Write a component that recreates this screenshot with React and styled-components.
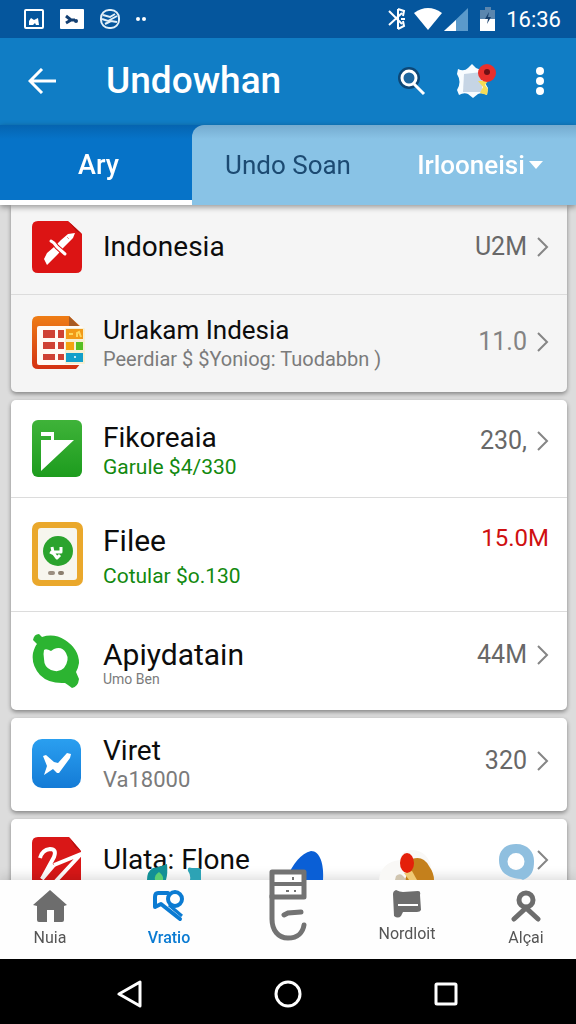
import React from 'react';
import styled, { createGlobalStyle } from 'styled-components';

const GlobalStyle = createGlobalStyle`
  * {
    box-sizing: border-box;
  }

  body {
    margin: 0;
    font-family: Roboto, 'Liberation Sans', sans-serif;
    background: #dcdcdc;
  }

  button {
    margin: 0;
    padding: 0;
    border: 0;
    background: none;
    color: inherit;
    font: inherit;
    cursor: pointer;
  }
`;

const groups = [
  {
    muted: true,
    rows: [
      { icon: 'plane', title: 'Indonesia', value: 'U2M', size: 'first' },
      {
        icon: 'sheet',
        title: 'Urlakam Indesia',
        note: 'Peerdiar $ $Yoniog: Tuodabbn )',
        noteSize: 20,
        value: '11.0',
        light: true,
        titleSize: 26,
        size: 'second',
      },
    ],
  },
  {
    rows: [
      { icon: 'flag', title: 'Fikoreaia', note: 'Garule $4/330', tone: 'green', value: '230,', size: 'raised' },
      { icon: 'tablet', title: 'Filee', titleSize: 30, note: 'Cotular $o.130', tone: 'green', value: '15.0M', size: 'tall' },
      { icon: 'ring', title: 'Apiydatain', titleSize: 30, note: 'Umo Ben', noteSize: 14, value: '44M', size: 'ring' },
    ],
  },
  { rows: [{ icon: 'check', title: 'Viret', note: 'Va18000', noteSize: 22, value: '320', size: 'single' }] },
  { rows: [{ icon: 'ribbon', title: 'Ulata: Flone', value: '', size: 'last' }] },
];

const navItems = [
  { id: 'home', label: 'Nuia' },
  { id: 'key', label: 'Vratio', active: true },
  { id: 'scan', label: '' },
  { id: 'note', label: 'Nordloit' },
  { id: 'person', label: 'Alçai' },
];

function AppIcon({ name }) {
  switch (name) {
    case 'plane':
      return (
        <svg width="50" height="52" viewBox="0 0 50 52" aria-hidden="true">
          <path d="M6 0H36L50 13V46Q50 52 44 52H6Q0 52 0 46V6Q0 0 6 0Z" fill="#dc1414" />
          <path d="M36 0L50 13L44 10Z" fill="#b80f0f" />
          <path d="M15 44L12 38L15 32L22 26L29 19L36 13L43 12L41 17L32 26L26 33Z" fill="#fff" />
          <path d="M19 20L22 22L25 26L33 33" fill="none" stroke="#dc1414" strokeWidth="5" />
          <path d="M19 20L22 22L25 26L33 33" fill="none" stroke="#fff" strokeWidth="3" strokeLinecap="round" />
          <path d="M35 16L37 18" stroke="#e88" strokeWidth="1" />
        </svg>
      );
    case 'sheet':
      return (
        <svg width="54" height="54" viewBox="0 0 54 54" aria-hidden="true">
          <defs>
            <linearGradient id="sheetFill" x1="0" y1="0" x2="0" y2="1">
              <stop offset="0" stopColor="#ee7d15" />
              <stop offset="1" stopColor="#d43112" />
            </linearGradient>
          </defs>
          <path d="M6 0H37L49 11V47L44 53H6Q0 53 0 47V6Q0 0 6 0Z" fill="url(#sheetFill)" />
          <path d="M37 0L47 10H37Z" fill="#a85b24" />
          <rect x="5" y="10" width="46" height="39" rx="2" fill="#fffaf5" />
          <rect x="33" y="12" width="20" height="36" rx="1" fill="#f7efd2" />
          <g fill="#cf4234">
            <rect x="11" y="14" width="12" height="8" />
            <rect x="26" y="14" width="6" height="8" />
            <rect x="11" y="26" width="12" height="7" />
            <rect x="26" y="26" width="6" height="7" />
            <rect x="11" y="38" width="12" height="6" />
            <rect x="26" y="38" width="6" height="6" />
          </g>
          <rect x="34" y="13" width="17" height="10" fill="#f29a18" />
          <path d="M37 18H41M45 21V17L47 16L49 21" fill="none" stroke="#ffd75c" strokeWidth="2" />
          <rect x="34" y="26" width="8" height="8" fill="#f4a30f" />
          <rect x="44" y="26" width="7" height="8" fill="#57bf22" />
          <rect x="34" y="37" width="17" height="9" fill="#149fca" />
          <circle cx="43" cy="41" r="1" fill="#fff" />
        </svg>
      );
    case 'flag':
      return (
        <svg width="50" height="57" viewBox="0 0 50 57" aria-hidden="true">
          <defs>
            <linearGradient id="flagFill" x1="0" y1="0" x2="0" y2="1">
              <stop offset="0" stopColor="#3fb339" />
              <stop offset="1" stopColor="#1d9c1e" />
            </linearGradient>
          </defs>
          <rect width="50" height="57" rx="6" fill="url(#flagFill)" />
          <path d="M9 12H22V20H42L9 51V20H19V16H9Z" fill="#fff" />
        </svg>
      );
    case 'tablet':
      return (
        <svg width="51" height="64" viewBox="0 0 51 64" aria-hidden="true">
          <rect width="51" height="64" rx="7" fill="#eaa82c" />
          <rect x="6" y="6" width="39" height="52" rx="3" fill="#f7f6ee" />
          <circle cx="26" cy="29" r="15" fill="#2ba32d" />
          <path
            d="M20 25L21 30H29V25M18 30L22 32L25 36L28 33"
            fill="none"
            stroke="#fff"
            strokeWidth="3"
            strokeLinejoin="round"
          />
          <rect x="16" y="49" width="7" height="4" rx="2" fill="#9b8f80" />
          <rect x="26" y="49" width="6" height="4" rx="2" fill="#8b7f6d" />
        </svg>
      );
    case 'ring':
      return (
        <svg width="48" height="56" viewBox="0 0 48 56" aria-hidden="true">
          <path
            d="M1 7Q2 1 7 1L10 4Q22 0 33 7Q47 16 47 30Q46 36 44 39L47 46Q46 54 40 55L36 52L33 50Q17 51 8 42Q-1 32 1 20Q3 13 5 11Z"
            fill="#2cb431"
          />
          <path d="M12 17Q14 15 19 18L22 16Q30 13 34 20Q38 27 32 35Q27 40 19 37Q12 34 12 26Q11 21 12 17Z" fill="#fff" />
        </svg>
      );
    case 'check':
      return (
        <svg width="49" height="49" viewBox="0 0 49 49" aria-hidden="true">
          <defs>
            <linearGradient id="checkFill" x1="0" y1="0" x2="0" y2="1">
              <stop offset="0" stopColor="#2a9ff0" />
              <stop offset="1" stopColor="#147bd6" />
            </linearGradient>
          </defs>
          <rect width="49" height="49" rx="10" fill="url(#checkFill)" />
          <path d="M11 17L14 16L22 23L26 24L35 14L39 15L38 19L27 34H25L21 30L12 36L15 27Z" fill="#fff" />
        </svg>
      );
    default:
      return (
        <svg width="50" height="54" viewBox="0 0 50 54" aria-hidden="true">
          <path d="M6 0H37L49 14V54H0V6Q0 0 6 0Z" fill="#d91717" />
          <path
            d="M8 21Q10 13 18 12Q25 12 22 20L10 42"
            fill="none"
            stroke="#fff"
            strokeWidth="4"
            strokeLinejoin="round"
          />
          <path d="M22 28L49 17L24 44" fill="none" stroke="#fff" strokeWidth="4" strokeLinejoin="round" />
          <path d="M10 42L22 28" stroke="#fff" strokeWidth="4" />
          <path d="M37 0L49 14L43 10Z" fill="#b90f0f" />
        </svg>
      );
  }
}

function NavIcon({ id }) {
  switch (id) {
    case 'home':
      return (
        <svg width="34" height="32" viewBox="0 0 34 32" aria-hidden="true">
          <path d="M17 0L34 15L31 16V30Q31 32 29 32H21V20H14V32H6Q4 32 4 30V16L0 15Z" fill="#6d6d6d" />
        </svg>
      );
    case 'key':
      return (
        <svg width="32" height="32" viewBox="0 0 32 32" fill="none" stroke="#0b7bd2" aria-hidden="true">
          <circle cx="22" cy="9" r="7" strokeWidth="4" />
          <path d="M15 3H5Q2 3 2 7V17L8 14L27 29" strokeWidth="4" strokeLinecap="round" strokeLinejoin="round" />
          <path d="M16 15L29 26" strokeWidth="3" />
        </svg>
      );
    case 'scan':
      return (
        <svg width="38" height="72" viewBox="0 0 38 72" fill="none" stroke="#737373" aria-hidden="true">
          <path d="M3 3H35V28H3Z" fill="#fff" strokeWidth="5" strokeLinejoin="round" />
          <path d="M3 15H35" strokeWidth="4" />
          <path d="M3 27V50C3 61 9 69 19 69C29 69 34 63 35 56" strokeWidth="5" strokeLinecap="round" />
          <path d="M15 46L19 44L32 43" strokeWidth="5" strokeLinecap="round" />
          <path d="M17 22H20M25 22H27M24 8V11" strokeWidth="2" />
        </svg>
      );
    case 'note':
      return (
        <svg width="28" height="28" viewBox="0 0 28 28" aria-hidden="true">
          <path d="M3 0Q7 2 10 2L25 1Q28 1 27 5L28 20Q27 22 24 22H10L8 26Q5 29 1 26L0 4Q0 1 3 0Z" fill="#6d6d6d" />
          <path d="M5 15H25" stroke="#fff" strokeWidth="2" />
        </svg>
      );
    default:
      return (
        <svg width="32" height="32" viewBox="0 0 32 32" fill="none" stroke="#6d6d6d" aria-hidden="true">
          <circle cx="16" cy="10" r="7" strokeWidth="5" />
          <path d="M4 29L16 18L28 29" strokeWidth="5" strokeLinecap="round" />
        </svg>
      );
  }
}

function PeekIcon({ id }) {
  switch (id) {
    case 'key':
      return (
        <svg width="60" height="16" viewBox="0 0 60 16" aria-hidden="true">
          <path d="M6 16Q6 7 12 4Q19 3 26 0Q27 9 25 16Z" fill="#128f96" />
          <path d="M14 16Q13 11 18 8Q23 12 22 16Z" fill="#5ccf73" />
          <path d="M47 7Q46 2 51 4H58Q61 5 60 9V16H49Q50 11 47 7Z" fill="#2da3b5" />
        </svg>
      );
    case 'scan':
      return (
        <svg width="64" height="30" viewBox="0 0 64 30" aria-hidden="true">
          <path d="M26 30Q36 5 51 1C60 1 64 14 63 30Z" fill="#0a5fd6" />
        </svg>
      );
    case 'note':
      return (
        <svg width="56" height="34" viewBox="0 0 56 34" aria-hidden="true">
          <path d="M0 34Q2 16 21 14Q22 3 34 4Q48 5 52 20L55 34Z" fill="#f9f8f6" />
          <path d="M26 34L33 13Q44 9 50 20Q55 27 55 34Z" fill="#c4801c" />
          <path d="M16 34L17 30Q22 25 27 34Z" fill="#d0c5b0" />
          <path d="M25 27L33 25L38 34H30Z" fill="#f0ca75" />
          <ellipse cx="28" cy="17" rx="7" ry="10" fill="#e4200a" />
        </svg>
      );
    default:
      return (
        <svg width="56" height="38" viewBox="0 0 56 38" aria-hidden="true">
          <path
            fillRule="evenodd"
            fill="#8fbfdf"
            d="M18 2C30 2 36 10 36 19C36 29 34 34 25 38L23 37C9 36 1 30 1 18C1 8 8 2 18 2ZM18 11A8 8 0 1 0 18 28A8 8 0 1 0 18 11Z"
          />
        </svg>
      );
  }
}

function Chevron() {
  return (
    <svg width="12" height="20" viewBox="0 0 12 20" fill="none" stroke="#858585" strokeWidth="2" aria-hidden="true">
      <path d="M1 1L10 10L1 19" />
    </svg>
  );
}

export default function App() {
  return (
    <Screen>
      <GlobalStyle />
      <StatusBar>
        <StatusGroup>
          <svg width="20" height="20" viewBox="0 0 20 20" aria-hidden="true">
            <rect x="1" y="1" width="18" height="18" rx="1" fill="none" stroke="#fff" strokeWidth="2" />
            <path d="M5 16V12L7 9L10 11L14 9L15 16H12L11 14L9 16Z" fill="#fff" />
          </svg>
          <svg width="24" height="20" viewBox="0 0 24 20" aria-hidden="true">
            <rect width="24" height="20" rx="1" fill="#fff" />
            <path d="M6 7L11 11H15M6 14L11 11" fill="none" stroke="#123f72" strokeWidth="3" />
            <circle cx="16" cy="12" r="2" fill="#123f72" />
          </svg>
          <svg width="20" height="20" viewBox="0 0 20 20" fill="none" stroke="#e3f0f8" strokeWidth="2" aria-hidden="true">
            <rect x="1" y="1" width="18" height="18" rx="8" />
            <path d="M3 6L10 8L15 5M2 10L8 12L17 7M5 15L11 12L17 13" />
          </svg>
          <svg width="10" height="4" viewBox="0 0 10 4" fill="#fff" aria-hidden="true">
            <circle cx="2" cy="2" r="2" />
            <circle cx="8" cy="2" r="2" />
          </svg>
        </StatusGroup>
        <StatusRight>
          <Bluetooth viewBox="0 0 20 24" aria-hidden="true">
            <path
              d="M1 4L14 17M1 18L14 6M10 2V22M10 2L16 4L15 9M10 22L16 19L15 14M13 12H17"
              fill="none"
              stroke="#fff"
              strokeWidth="2"
            />
          </Bluetooth>
          <Signals viewBox="0 0 84 24" aria-hidden="true">
            <path d="M0 6Q14 -4 28 6L14 23Z" fill="#fff" />
            <path d="M30 24L54 1V24Z" fill="#5b9acb" />
            <path d="M30 24L42 13V24Z" fill="#fff" />
            <path d="M66 3H71V0H77V3H81V24H66Z" fill="#5b86ae" />
            <path d="M66 12H81V24H66Z" fill="#fff" />
            <path d="M75 5L71 12H74L73 17L77 10H74Z" fill="#173f6c" />
          </Signals>
          <Clock>16:36</Clock>
        </StatusRight>
      </StatusBar>

      <Toolbar>
        <IconButton aria-label="Back">
          <svg width="28" height="26" viewBox="0 0 28 26" fill="none" stroke="#fff" strokeWidth="3" aria-hidden="true">
            <path d="M28 13H2M14 1L2 13L14 25" />
          </svg>
        </IconButton>
        <Heading>Undowhan</Heading>
        <Actions>
          <IconButton aria-label="Search">
            <svg width="28" height="30" viewBox="0 0 28 30" fill="none" aria-hidden="true">
              <circle cx="11" cy="12" r="11" fill="#0c4777" />
              <circle cx="11" cy="12" r="7" fill="#1c659e" stroke="#fff" strokeWidth="3" />
              <path d="M16 18L26 28" stroke="#fff" strokeWidth="3" />
            </svg>
          </IconButton>
          <IconButton aria-label="Map">
            <svg width="40" height="36" viewBox="0 0 40 36" aria-hidden="true">
              <path
                d="M2 6Q8 9 12 5L16 1L20 5Q25 8 31 6L30 14Q28 20 32 25L31 32Q26 29 22 31L17 35L12 31Q8 29 3 32L1 27Q6 19 1 11Z"
                fill="#f8fcff"
              />
              <path d="M8 11L26 9V29H7Z" fill="#c6d5e5" />
              <path d="M22 18H32L29 22L32 26L31 32L24 30L27 24Z" fill="#f5dc57" />
              <circle cx="31" cy="10" r="9" fill="#e92f2b" />
              <circle cx="31" cy="9" r="3" fill="#701015" />
            </svg>
          </IconButton>
          <IconButton aria-label="More options">
            <svg width="8" height="28" viewBox="0 0 8 28" fill="#fff" aria-hidden="true">
              <circle cx="4" cy="4" r="4" />
              <circle cx="4" cy="14" r="4" />
              <circle cx="4" cy="24" r="4" />
            </svg>
          </IconButton>
        </Actions>
      </Toolbar>

      <Tabs role="tablist">
        <ActiveTab role="tab" aria-selected="true">
          Ary
        </ActiveTab>
        <OtherTabs>
          <Tab role="tab" aria-selected="false" $dark>
            Undo Soan
          </Tab>
          <Tab role="tab" aria-selected="false">
            Irlooneisi
            <svg width="14" height="8" viewBox="0 0 14 8" aria-hidden="true">
              <path d="M0 0H14L7 8Z" fill="#fff" />
            </svg>
          </Tab>
        </OtherTabs>
      </Tabs>

      <List>
        {groups.map((group, index) => (
          <Card key={index} $muted={group.muted}>
            {group.rows.map(row => (
              <Row key={row.title} $size={row.size}>
                <IconSlot>
                  <AppIcon name={row.icon} />
                </IconSlot>
                <RowText $size={row.size}>
                  <RowTitle $size={row.titleSize}>{row.title}</RowTitle>
                  {row.note && (
                    <RowNote $tone={row.tone} $size={row.noteSize} $spaced={row.size === 'tall'}>
                      {row.note}
                    </RowNote>
                  )}
                </RowText>
                <RowValue $size={row.size} $light={row.light} $alert={row.size === 'tall'}>
                  {row.value}
                  {row.size !== 'tall' && <Chevron />}
                </RowValue>
              </Row>
            ))}
          </Card>
        ))}
      </List>

      <BottomNav>
        {navItems.map(item => (
          <NavButton key={item.id} $active={item.active} aria-label={item.label || 'Scan'}>
            {item.id !== 'home' && (
              <Peek>
                <PeekIcon id={item.id} />
              </Peek>
            )}
            {item.label ? (
              <NavIcon id={item.id} />
            ) : (
              <Raised>
                <NavIcon id={item.id} />
              </Raised>
            )}
            {item.label}
          </NavButton>
        ))}
      </BottomNav>

      <SystemBar>
        <IconButton aria-label="System back">
          <svg width="26" height="28" viewBox="0 0 26 28" fill="none" stroke="#fff" strokeWidth="3" aria-hidden="true">
            <path d="M24 2V26L3 14Z" strokeLinejoin="round" />
          </svg>
        </IconButton>
        <IconButton aria-label="System home">
          <svg width="28" height="28" viewBox="0 0 28 28" fill="none" stroke="#fff" strokeWidth="3" aria-hidden="true">
            <circle cx="14" cy="14" r="12" />
          </svg>
        </IconButton>
        <IconButton aria-label="Recent apps">
          <svg width="24" height="24" viewBox="0 0 24 24" fill="none" stroke="#fff" strokeWidth="3" aria-hidden="true">
            <rect x="2" y="2" width="20" height="20" rx="1" />
          </svg>
        </IconButton>
      </SystemBar>
    </Screen>
  );
}

const Screen = styled.div`
  display: flex;
  flex-direction: column;
  height: 100vh;
`;

const StatusBar = styled.header`
  display: flex;
  flex: none;
  align-items: center;
  justify-content: space-between;
  height: 38px;
  padding: 0 15px 0 24px;
  color: #fff;
  background: #05569d;
`;

const StatusGroup = styled.div`
  display: flex;
  align-items: center;
  gap: 16px;
`;

const StatusRight = styled.div`
  display: flex;
  align-items: center;
`;

const Bluetooth = styled.svg`
  width: 20px;
  height: 24px;
  margin-right: 6px;
`;

const Signals = styled.svg`
  width: 84px;
  height: 24px;
`;

const Clock = styled.span`
  margin-left: 8px;
  font-size: 22px;
`;

const Toolbar = styled.div`
  display: flex;
  flex: none;
  align-items: center;
  height: 87px;
  padding: 0 32px 2px 28px;
  color: #fff;
  background: #107dc5;
`;

const IconButton = styled.button`
  display: flex;
  align-items: center;
  justify-content: center;
`;

const Heading = styled.h1`
  flex: 1;
  margin: 0 0 0 50px;
  font-size: 37px;
  font-weight: 500;
`;

const Actions = styled.div`
  display: flex;
  align-items: center;
  gap: 40px;

  button:first-child {
    margin-right: -10px;
  }
`;

const Tabs = styled.div`
  display: grid;
  flex: none;
  grid-template-columns: 1fr 2fr;
  height: 80px;
  background: linear-gradient(#0564b0, #0673c8 14px);
  z-index: 1;
  box-shadow: 0 2px 6px rgba(0, 0, 0, 0.4);
`;

const ActiveTab = styled.button`
  padding: 5px 5px 0 10px;
  border-bottom: 5px solid #fff;
  color: #fff;
  font-size: 27px;
  font-weight: 500;
`;

const OtherTabs = styled.div`
  display: grid;
  grid-template-columns: 1fr 1fr;
  border-radius: 12px 0 0 0;
  background: linear-gradient(#75abcf, #89c3e6 14px);
`;

const Tab = styled.button`
  display: flex;
  align-items: center;
  justify-content: center;
  gap: 4px;
  color: ${props => (props.$dark ? '#1c4a72' : '#fff')};
  font-size: 26px;
  font-weight: ${props => (props.$dark ? 400 : 500)};
`;

const List = styled.main`
  display: flex;
  flex: 1;
  flex-direction: column;
  gap: 8px;
  min-height: 0;
  padding: 0 9px 0 11px;
  overflow-y: auto;
  scrollbar-width: none;
  background: #dcdcdc;
`;

const Card = styled.section`
  flex: none;
  border-radius: ${props => (props.$muted ? '0 0 5px 5px' : '5px')};
  background: ${props => (props.$muted ? '#f5f5f5' : '#fff')};
  box-shadow: 0 2px 4px rgba(0, 0, 0, 0.4);
`;

// height of each kind of row, and the space that lifts its text and its value
const rowSizes = {
  first: { height: 89, row: 6, text: 0, value: 0 },
  second: { height: 98, row: 2, text: 0, value: 2 },
  raised: { height: 97, row: 0, text: -4, value: 16 },
  tall: { height: 114, row: 2, text: -6, value: 32 },
  ring: { height: 99, row: 0, text: -4, value: 12 },
  single: { height: 93, row: 2, text: 0, value: 6 },
  last: { height: 90, row: 0, text: 8, value: 8 },
};

const Row = styled.div`
  display: flex;
  align-items: center;
  min-height: ${props => rowSizes[props.$size].height}px;
  padding: 0 18px ${props => rowSizes[props.$size].row}px 21px;

  & + & {
    border-top: 1px solid #dcdcdc;
  }
`;

const IconSlot = styled.div`
  display: flex;
  flex: none;
  width: 71px;
`;

const RowText = styled.div`
  flex: 1;
  margin-bottom: ${props => rowSizes[props.$size].text}px;
`;

const RowTitle = styled.h2`
  margin: 0;
  color: #0c0c0c;
  font-size: ${props => props.$size || 28}px;
  font-weight: 400;
  line-height: 32px;
`;

const RowNote = styled.p`
  margin: ${props => (props.$spaced ? 6 : 0)}px 0 0;
  color: ${props => (props.$tone === 'green' ? '#12890f' : '#7b7b7b')};
  font-size: ${props => props.$size || 21}px;
  line-height: ${props => (props.$size === 14 ? 16 : 26)}px;
`;

const RowValue = styled.div`
  display: flex;
  align-items: center;
  gap: 10px;
  margin-bottom: ${props => rowSizes[props.$size].value}px;
  color: ${props => (props.$alert ? '#cf1010' : props.$light ? '#838383' : '#686868')};
  font-size: ${props => (props.$alert ? 24 : 25)}px;
  line-height: 32px;
`;

const BottomNav = styled.nav`
  display: flex;
  flex: none;
  justify-content: space-between;
  height: 79px;
  padding: 0 10px;
  background: #fefefe;
  box-shadow: 0 -2px 12px rgba(0, 0, 0, 0.16);
`;

const NavButton = styled.button`
  position: relative;
  display: flex;
  flex-direction: column;
  align-items: center;
  gap: 6px;
  width: 80px;
  padding-top: 10px;
  color: ${props => (props.$active ? '#0b7bd2' : '#555')};
  font-size: 16px;
  font-weight: ${props => (props.$active ? 500 : 400)};
  line-height: 20px;
`;

const Peek = styled.span`
  position: absolute;
  bottom: 100%;
  left: 12px;
  display: flex;
`;

const Raised = styled.span`
  position: absolute;
  bottom: 18px;
  display: flex;
`;

const SystemBar = styled.footer`
  display: flex;
  flex: none;
  align-items: center;
  justify-content: space-between;
  height: 65px;
  padding: 4px 118px 0 116px;
  background: #000;
`;
